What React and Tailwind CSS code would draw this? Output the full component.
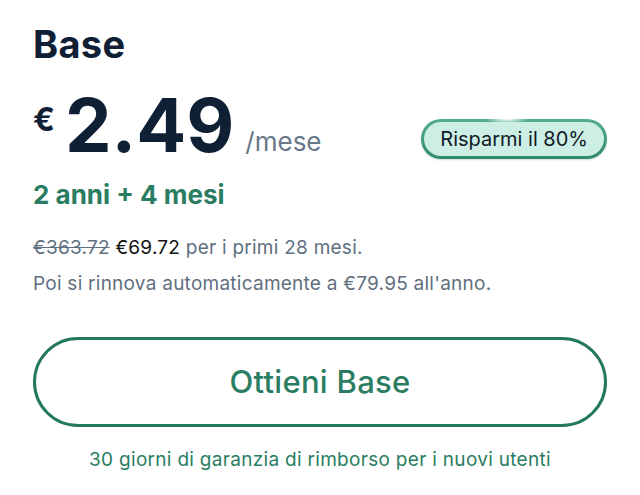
export default function App() {
  return (
    <div className="w-[640px] h-[495px] bg-white px-[33px] pt-[24px] font-['Inter',sans-serif] overflow-hidden">
      <h1 className="text-[38px] leading-10 font-bold text-[#0f2034] tracking-[0.3px]">Base</h1>
      <div className="mt-[23px] flex justify-between">
        <div className="flex items-baseline">
          <span className="self-start mt-[17px] text-[32px] leading-none font-bold text-[#0f2034]">€</span>
          <span className="ml-[10px] text-[74px] leading-none font-bold text-[#0f2034] translate-y-[1px]">2.49</span>
          <span className="ml-[11px] text-[26px] leading-none text-[#66788a]">/mese</span>
        </div>
        <div className="self-end mb-[2px] rounded-full p-[3px] bg-[radial-gradient(ellipse_22px_5px_at_46%_0%,#ffffff,transparent),linear-gradient(#52ad90,#2e8b6e)] shadow-[0_1px_2px_rgba(0,0,0,0.15)]">
          <div className="h-[34px] px-[16px] rounded-full bg-[#cdeee4] flex items-center text-[20px] text-[#111827]">
            Risparmi il 80%
          </div>
        </div>
      </div>
      <p className="mt-[18px] text-[26px] leading-8 font-bold text-[#2a7d62]">2 anni + 4 mesi</p>
      <div className="mt-[20px] text-[19px] leading-[33px] tracking-[0.25px] text-[#5f6f80]">
        <p>
          <span className="line-through">€363.72</span>{" "}
          <span className="text-[#111111]">€69.72</span> per i primi 28 mesi.
        </p>
        <p className="mt-[3px]">Poi si rinnova automaticamente a €79.95 all'anno.</p>
      </div>
      <button className="mt-[37px] w-full h-[90px] rounded-full border-[3px] border-[#22795b] bg-white flex items-center justify-center text-[31px] font-medium tracking-[0.3px] text-[#2a7d62]">
        Ottieni Base
      </button>
      <p className="mt-[19px] text-center text-[19px] leading-7 tracking-[0.3px] text-[#2a7d62]">
        30 giorni di garanzia di rimborso per i nuovi utenti
      </p>
    </div>
  );
}
